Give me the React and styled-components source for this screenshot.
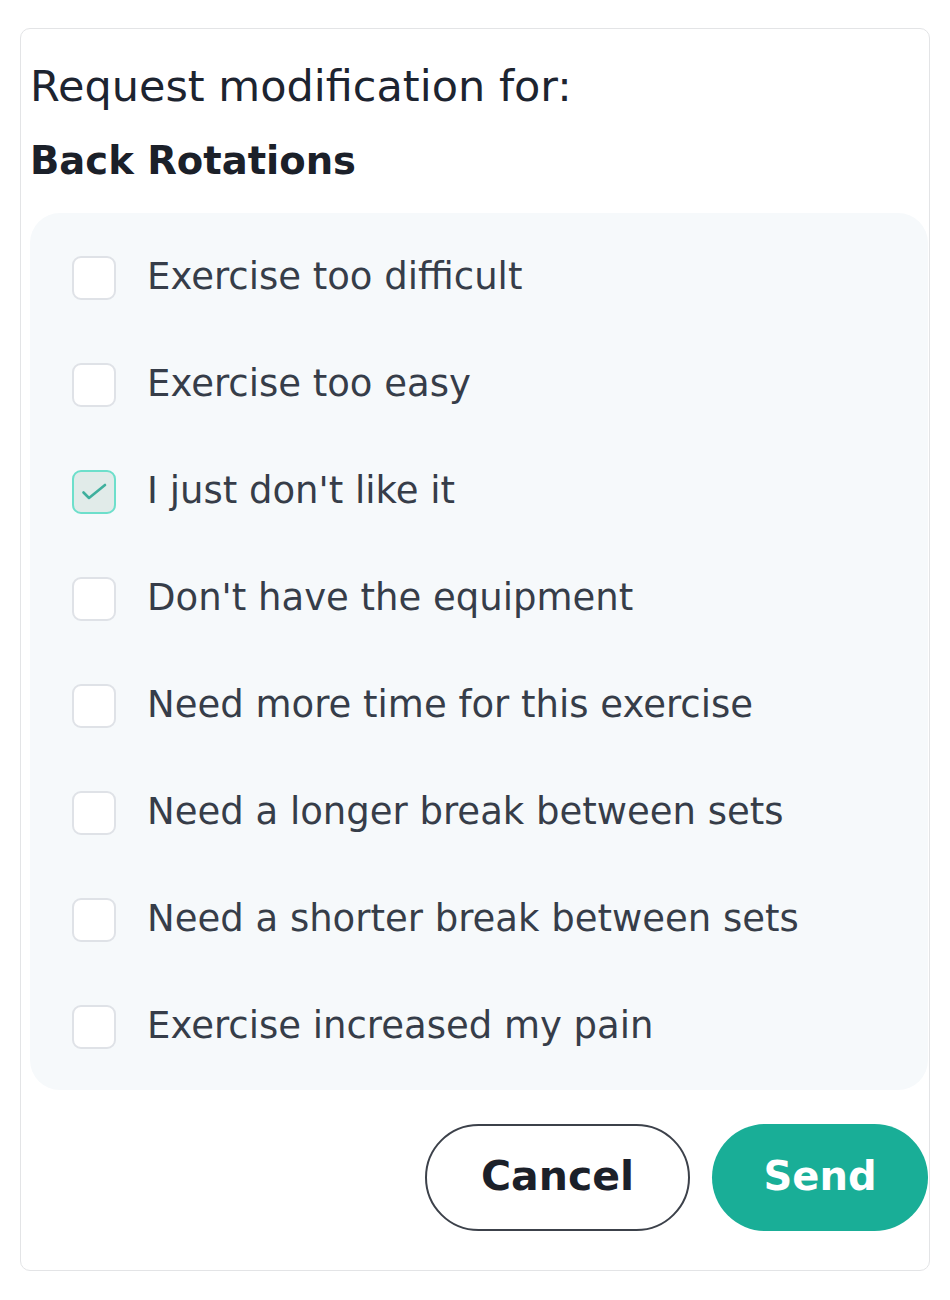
import React, { useState } from "react"
import styled, { createGlobalStyle } from "styled-components"

const GlobalStyle = createGlobalStyle`
  body {
    margin: 0;
    background: #ffffff;
    font-family: "DejaVu Sans", "Liberation Sans", sans-serif;
  }
`

const Page = styled.div`
  padding: 28px 20px 28px 20px;
`

const Card = styled.div`
  width: 910px;
  box-sizing: border-box;
  border: 1px solid #e3e4e6;
  border-radius: 10px;
  padding: 29px 1px 39px 9px;
`

const Title = styled.h2`
  margin: 0;
  font-size: 43px;
  line-height: 56px;
  font-weight: 400;
  color: #1d2430;
`

const Subtitle = styled.h3`
  margin: 19px 0 0;
  font-size: 38.5px;
  line-height: 56px;
  font-weight: 700;
  color: #1b2029;
`

const OptionList = styled.div`
  margin-top: 24px;
  background: #f6f9fb;
  border-radius: 30px;
  padding: 11px 0 10px 42px;
  display: flex;
  flex-direction: column;
`

const OptionRow = styled.label`
  display: flex;
  align-items: center;
  gap: 31px;
  height: 107px;
  cursor: pointer;
`

const Box = styled.span`
  flex: none;
  width: 44px;
  height: 44px;
  box-sizing: border-box;
  border-radius: 9px;
  border: 2px solid ${props => (props.checked ? "#6ddfcb" : "#dfe2e7")};
  background: ${props => (props.checked ? "#e1ebe9" : "#ffffff")};
  display: flex;
  align-items: center;
  justify-content: center;
`

const OptionText = styled.span`
  font-size: 37px;
  color: #363d49;
  line-height: 1;
  padding-bottom: 3px;
`

const Actions = styled.div`
  margin-top: 34px;
  display: flex;
  justify-content: flex-end;
  gap: 22px;
`

const Button = styled.button`
  height: 107px;
  border-radius: 54px;
  font-family: "DejaVu Sans", "Liberation Sans", sans-serif;
  font-weight: 700;
  cursor: pointer;
  box-sizing: border-box;
  padding: 0 0 4px;
`

const CancelButton = styled(Button)`
  width: 265px;
  font-size: 41px;
  background: #ffffff;
  border: 2px solid #3c414a;
  color: #1b2029;
`

const SendButton = styled(Button)`
  width: 216px;
  font-size: 40px;
  background: #19ae97;
  border: none;
  color: #ffffff;
`

const options = [
  "Exercise too difficult",
  "Exercise too easy",
  "I just don't like it",
  "Don't have the equipment",
  "Need more time for this exercise",
  "Need a longer break between sets",
  "Need a shorter break between sets",
  "Exercise increased my pain",
]

function Check() {
  return (
    <svg width="32" height="32" viewBox="0 0 32 32" fill="none" stroke="#3faf9d" strokeWidth="2.6" strokeLinecap="round" strokeLinejoin="round">
      <path d="M5.5 16.5l5.5 5.5L27 9" />
    </svg>
  )
}

export default function App() {
  const [selected, setSelected] = useState([2])

  const toggle = i =>
    setSelected(s => (s.includes(i) ? s.filter(x => x !== i) : [...s, i]))

  return (
    <Page>
      <GlobalStyle />
      <Card>
        <Title>Request modification for:</Title>
        <Subtitle>Back Rotations</Subtitle>
        <OptionList>
          {options.map((opt, i) => {
            const checked = selected.includes(i)
            return (
              <OptionRow key={opt} onClick={() => toggle(i)}>
                <Box checked={checked}>{checked && <Check />}</Box>
                <OptionText>{opt}</OptionText>
              </OptionRow>
            )
          })}
        </OptionList>
        <Actions>
          <CancelButton>Cancel</CancelButton>
          <SendButton>Send</SendButton>
        </Actions>
      </Card>
    </Page>
  )
}
